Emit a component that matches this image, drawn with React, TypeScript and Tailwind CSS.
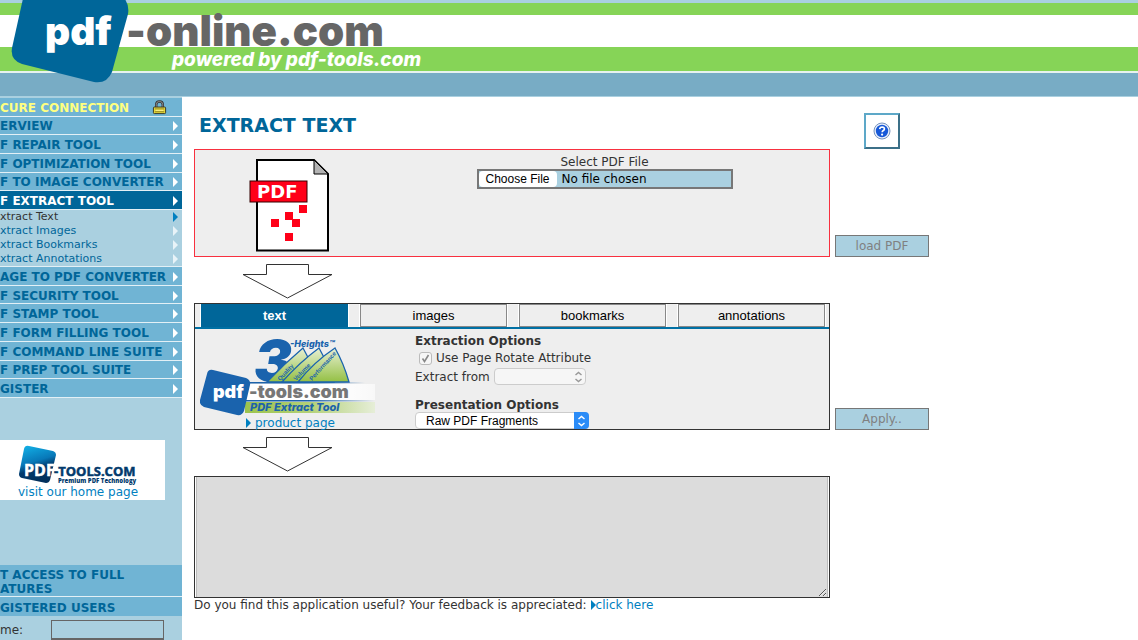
import React from "react";

const topLinks = ["ERVIEW", "F REPAIR TOOL", "F OPTIMIZATION TOOL", "F TO IMAGE CONVERTER"];
const subLinks = ["xtract Text", "xtract Images", "xtract Bookmarks", "xtract Annotations"];
const bottomLinks = [
  "AGE TO PDF CONVERTER",
  "F SECURITY TOOL",
  "F STAMP TOOL",
  "F FORM FILLING TOOL",
  "F COMMAND LINE SUITE",
  "F PREP TOOL SUITE",
  "GISTER",
];
const tabs = ["text", "images", "bookmarks", "annotations"];

function Marker({ className }: { className: string }) {
  return (
    <svg viewBox="0 0 5 10" className={`h-[10px] w-[5px] shrink-0 ${className}`} fill="currentColor" aria-hidden="true">
      <path d="M0 0L5 5L0 10Z" />
    </svg>
  );
}

function SiteLogo() {
  return (
    <svg width="440" height="84" viewBox="0 0 440 84" className="absolute top-0 left-0" role="img" aria-label="pdf-online.com">
      <path
        d="M24 -6L12 48Q10 60 22 64L94 82Q107 84 112 72L128 14Q130 2 120 -6Z"
        fill="#006699"
      />
      <g fontFamily="Inter, 'Liberation Sans', sans-serif" fontWeight="900">
        <text x="45" y="45" fontSize="39" fill="#fff">pdf</text>
        <text x="126" y="46" fontSize="42" fill="#666">-online.com</text>
      </g>
      <text
        x="172"
        y="66"
        fontSize="19"
        fontFamily="Inter, 'Liberation Sans', sans-serif"
        fontWeight="800"
        fontStyle="italic"
        fill="#fff"
      >
        powered by pdf-tools.com
      </text>
    </svg>
  );
}

function LockIcon() {
  return (
    <svg width="15" height="15" viewBox="0 0 16 16" aria-hidden="true">
      <path d="M4.500 8V5Q4.500 1.500 8 1.500Q11.500 1.500 11.500 5V8" fill="none" stroke="#333" strokeWidth="2.600" />
      <path d="M4.500 8V5Q4.500 1.500 8 1.500Q11.500 1.500 11.500 5V8" fill="none" stroke="#aaa" strokeWidth="0.800" />
      <rect x="1.500" y="7.500" width="13" height="7" rx="1" fill="#e8d93a" stroke="#333322" />
      <path d="M3 9.500H13M3 12.500H13" stroke="#8d8324" />
      <path d="M4 11H12" stroke="#fff799" />
    </svg>
  );
}

function NavLink({ label, active }: { label: string; active?: boolean }) {
  return (
    <a
      href="#"
      className={`flex items-center justify-between border-b border-[#e3f0f6] pt-[2px] pr-1 ${
        active ? "bg-[#006699] text-white" : "bg-[#70b4d4] text-[#006699]"
      }`}
    >
      <span>{label}</span>
      <Marker className="text-white" />
    </a>
  );
}

function ToolsLogo() {
  return (
    <svg width="120" height="40" viewBox="0 0 120 40" role="img" aria-label="PDF-TOOLS.COM Premium PDF Technology">
      <defs>
        <linearGradient id="badge" x1="0" y1="0" x2="0.300" y2="1">
          <stop offset="0" stopColor="#13b5ea" />
          <stop offset="0.500" stopColor="#0878b8" />
          <stop offset="0.700" stopColor="#023a6c" />
          <stop offset="1" stopColor="#02305c" />
        </linearGradient>
      </defs>
      <path d="M11 1L35 6Q38 7 38 10L32 35Q31 38 28 38L4 33Q1 32 1 29L6 4Q7 0 11 1Z" fill="url(#badge)" />
      <g fontFamily="'Open Sans', sans-serif" fontWeight="700" strokeWidth="0.500">
        <text x="6" y="31" fontSize="16" fill="#fff" stroke="#fff">
          PDF
        </text>
        <text x="36" y="31" fontSize="13" fill="#023a6c" stroke="#023a6c">
          -TOOLS.COM
        </text>
      </g>
      <text x="40" y="38" fontSize="6" fontFamily="'Open Sans', sans-serif" fontWeight="800" fill="#023a6c">
        Premium PDF Technology
      </text>
    </svg>
  );
}

function PdfFileIcon() {
  return (
    <svg width="82" height="96" viewBox="0 0 82 96" aria-hidden="true">
      <path d="M9 4H66L80 18V94.500H9Z" fill="#fff" stroke="#000" strokeWidth="2" />
      <path d="M66 4V18H80Z" fill="#b3b3b3" stroke="#000" strokeWidth="1" />
      <rect x="2" y="25" width="57" height="21" fill="#ff0018" stroke="#300" />
      <text x="9" y="42" fontSize="18" fontFamily="'DejaVu Sans', sans-serif" fontWeight="700" fill="#fff">
        PDF
      </text>
      <g fill="#ff0018">
        <rect x="51" y="49" width="8" height="8" />
        <rect x="37" y="56" width="8" height="8" />
        <rect x="44" y="63" width="8" height="8" />
        <rect x="23" y="63" width="8" height="8" />
        <rect x="37" y="77" width="8" height="8" />
      </g>
    </svg>
  );
}

function DownArrow() {
  return (
    <svg width="93" height="36" viewBox="0 0 93 36" aria-hidden="true">
      <path d="M25.500 1.500H67.500V11.500H91L46.500 35L2 11.500H25.500Z" fill="#fff" stroke="#333" />
    </svg>
  );
}

function HeightsLogo() {
  return (
    <svg width="176" height="80" viewBox="0 0 176 80" role="img" aria-label="3-Heights pdf-tools.com PDF Extract Tool">
      <defs>
        <linearGradient id="white" x1="0" x2="1">
          <stop offset="0.700" stopColor="#fff" />
          <stop offset="1" stopColor="#fff" stopOpacity="0.600" />
        </linearGradient>
        <linearGradient id="green" x1="0" x2="1">
          <stop offset="0" stopColor="#9cc34c" />
          <stop offset="0.500" stopColor="#b3d078" />
          <stop offset="1" stopColor="#e6eed8" />
        </linearGradient>
        <linearGradient id="line" x1="0" x2="1">
          <stop offset="0.500" stopColor="#1d63aa" />
          <stop offset="1" stopColor="#1d63aa" stopOpacity="0" />
        </linearGradient>
        <linearGradient id="hill" x1="0" y1="0" x2="0" y2="1">
          <stop offset="0" stopColor="#e8f0d4" />
          <stop offset="1" stopColor="#94c044" />
        </linearGradient>
      </defs>
      <text x="54" y="45" fontSize="57" fontFamily="Inter, sans-serif" fontWeight="900" fontStyle="italic" fill="#1a63ad">
        3
      </text>
      <g fill="url(#hill)" stroke="#1a63ad" strokeWidth="1.300">
        <path d="M67 46Q84 28 103 12Q112 28 118 46Z" />
        <path d="M82 46Q100 26 119 12Q128 28 134 46Z" />
        <path d="M98 46Q114 26 135 12Q144 28 149 46Z" />
      </g>
      <g fontFamily="'Liberation Sans', sans-serif" fontWeight="700" fill="#1a63ad">
        <text x="80" y="45" fontSize="6" transform="rotate(-46 80 45)">Quality</text>
        <text x="96" y="45" fontSize="6" transform="rotate(-46 96 45)">Volume</text>
        <text x="112" y="45" fontSize="6" transform="rotate(-48 112 45)">Performance</text>
      </g>
      <text x="90" y="11" fontSize="9" fontFamily="Inter, sans-serif" fontWeight="800" fontStyle="italic" fill="#1a63ad">
        -Heights™
      </text>
      <rect x="45" y="48" width="130" height="16" fill="url(#white)" />
      <rect x="45" y="46" width="120" height="1.500" fill="url(#line)" />
      <rect x="45" y="64" width="130" height="1.500" fill="url(#line)" />
      <rect x="45" y="66" width="130" height="11" fill="url(#green)" />
      <path d="M13 34L46 42Q51 44 50 49L44 75Q42 80 37 79L4 71Q-1 69 0 64L7 38Q8 33 13 34Z" fill="#1a63ad" />
      <g fontFamily="Inter, sans-serif" fontWeight="900">
        <text x="13" y="62" fontSize="18" fill="#fff">pdf</text>
        <text x="49" y="62" fontSize="18" fill="#777">-tools.com</text>
      </g>
      <text x="50" y="75" fontSize="11" fontFamily="Inter, sans-serif" fontWeight="800" fontStyle="italic" fill="#1d63aa">
        PDF Extract Tool
      </text>
    </svg>
  );
}

function HelpIcon() {
  return (
    <svg width="18" height="18" viewBox="0 0 18 18" aria-hidden="true">
      <circle cx="9" cy="9" r="8" fill="#e7effc" stroke="#7893bd" />
      <circle cx="9" cy="9" r="6.200" fill="#1658d8" />
      <path d="M6.700 7.200Q6.900 5 9.200 5Q11.500 5.100 11.400 7Q11.300 8.100 10 8.800Q9.200 9.300 9.200 10.300" fill="none" stroke="#fff" strokeWidth="1.700" />
      <circle cx="9.100" cy="12.600" r="1.100" fill="#fff" />
    </svg>
  );
}

function Chevrons() {
  return (
    <svg width="9" height="12" viewBox="0 0 9 12" fill="none" stroke="currentColor" strokeWidth="1.500" aria-hidden="true">
      <path d="M1.500 4L4.500 1.500L7.500 4M1.500 8L4.500 10.500L7.500 8" />
    </svg>
  );
}

const row = "grid grid-cols-[minmax(0,636px)_94px] gap-x-[5px]";
const actionButton =
  "h-[22px] self-end border border-[#777] bg-[#aad0e0] text-xs text-[#808080]";

export default function App() {
  return (
    <div className="flex h-screen flex-col overflow-hidden bg-white font-['DejaVu_Sans',Verdana,sans-serif] text-xs text-[#333]">
      <header className="relative shrink-0">
        <div className="h-[3px] bg-[#aad0e0]" />
        <div className="h-3 bg-[#86d457]" />
        <div className="h-8 bg-white" />
        <div className="h-6 bg-[#86d457]" />
        <div className="h-[2px] bg-[#e8f2ee]" />
        <div className="h-6 border-b border-[#aad0e0] bg-[#78acc5]" />
        <SiteLogo />
      </header>

      <div className="flex min-h-0 flex-1">
        <aside className="w-[182px] shrink-0 overflow-hidden bg-[#aad0e0] pt-px leading-[14px] whitespace-nowrap">
          <nav>
            <div className="grid min-h-[112px] auto-rows-fr font-bold">
              <div className="flex items-center justify-between border-b border-[#e3f0f6] bg-[#70b4d4] pt-[2px] pr-[15px] text-[#ffff80]">
                <span>CURE CONNECTION</span>
                <LockIcon />
              </div>
              {topLinks.map((label) => (
                <NavLink key={label} label={label} />
              ))}
              <NavLink label="F EXTRACT TOOL" active />
            </div>
            <ul className="border-b border-[#e3f0f6] text-[11px]">
              {subLinks.map((label, i) => (
                <li key={label}>
                  <a
                    href="#"
                    className={`flex items-center justify-between pr-1 leading-[14px] ${i === 0 ? "text-[#333]" : "text-[#006699]"}`}
                  >
                    <span>{label}</span>
                    <Marker className={i === 0 ? "text-[#0080c0]" : "text-[#e8f3f8]"} />
                  </a>
                </li>
              ))}
            </ul>
            <div className="grid min-h-[131px] auto-rows-fr font-bold">
              {bottomLinks.map((label) => (
                <NavLink key={label} label={label} />
              ))}
            </div>
          </nav>

          <a href="#" className="mt-[42px] mr-[17px] flex h-[60px] flex-col items-start bg-white pt-[5px] pl-[18px] text-[#0080c0]">
            <ToolsLogo />
            <span>visit our home page</span>
          </a>

          <h2 className="mt-[65px] border-b border-[#e3f0f6] bg-[#70b4d4] pt-[3px] font-bold text-[#006699]">
            T ACCESS TO FULL
            <br />
            ATURES
          </h2>
          <h2 className="bg-[#70b4d4] pt-[4px] pb-px font-bold text-[#006699]">GISTERED USERS</h2>
          <div className="flex items-center pt-[4px]">
            <label htmlFor="name" className="w-[51px]">
              me:
            </label>
            <input id="name" type="text" className="h-5 w-[113px] border border-b-2 border-[#666] bg-[#aad0e0] px-1" />
          </div>
        </aside>

        <main className="min-w-0 flex-1 pl-3">
          <div className={`${row} h-[52px] pt-4`}>
            <h1 className="pl-[5px] text-[19px] leading-6 font-bold text-[#006699]">EXTRACT TEXT</h1>
            <button
              type="button"
              aria-label="Help"
              className="flex h-9 w-9 items-center justify-center justify-self-center border-2 border-t-[#5da8c8] border-r-[#3c7088] border-b-[#3c7088] border-l-[#5da8c8] bg-white"
            >
              <HelpIcon />
            </button>
          </div>

          <div className={row}>
            <section className="grid min-h-[108px] grid-cols-[188px_1fr] border border-[#f8303f] bg-[#eee]">
              <div className="flex justify-center pt-[6px]">
                <PdfFileIcon />
              </div>
              <div className="flex flex-col items-center pt-[5px] pr-[3px]">
                <label htmlFor="file" className="leading-[14px]">
                  Select PDF File
                </label>
                <input
                  id="file"
                  type="file"
                  className="h-5 w-64 border-2 border-[#777] bg-[#aad0e0] text-xs leading-4 text-black file:mr-[5px] file:h-4 file:w-[78px] file:rounded file:bg-white file:font-['Liberation_Sans'] file:text-xs file:leading-4"
                />
              </div>
            </section>
            <button type="button" disabled className={actionButton}>
              load PDF
            </button>
          </div>

          <div className="flex h-[46px] w-[186px] justify-center pt-[6px]">
            <DownArrow />
          </div>

          <div className={row}>
            <section className="border border-[#333] bg-[#eee]">
              <div
                role="tablist"
                className="grid grid-cols-4 gap-3 border-b-2 border-[#0070a4] pr-1 pl-[6px] font-['Liberation_Sans'] text-[13px]"
              >
                {tabs.map((tab, i) => (
                  <button
                    key={tab}
                    type="button"
                    role="tab"
                    aria-selected={i === 0}
                    className={`h-[23px] border shadow-[1px_0_0_#fff,-1px_0_0_#fff] ${
                      i === 0
                        ? "border-[#006699] bg-[#006699] font-bold text-white"
                        : "border-[#888] bg-[#eee] text-black"
                    }`}
                  >
                    {tab}
                  </button>
                ))}
              </div>
              <div className="grid h-[100px] grid-cols-[220px_1fr]">
                <div className="flex flex-col items-start pt-[7px] pl-[5px] leading-[14px] text-[#0080c0]">
                  <HeightsLogo />
                  <a href="#" className="ml-[46px] flex items-center gap-1">
                    <Marker className="text-[#0080c0]" />
                    product page
                  </a>
                </div>
                <div className="flex flex-col items-start pt-[5px] leading-[14px]">
                  <h3 className="font-bold">Extraction Options</h3>
                  <label className="mt-[3px] flex items-center gap-1 pl-1">
                    <span className="relative flex">
                      <input
                        type="checkbox"
                        checked
                        disabled
                        readOnly
                        className="h-[13px] w-[13px] appearance-none rounded-[3px] border border-[#bbb] bg-[#f6f6f6]"
                      />
                      <svg viewBox="0 0 13 13" className="absolute inset-0" fill="none" stroke="#888" strokeWidth="1.600" aria-hidden="true">
                        <path d="M3.500 6.500L5.500 9.500L9.500 3" />
                      </svg>
                    </span>
                    Use Page Rotate Attribute
                  </label>
                  <div className="mt-[3px] flex items-center gap-1">
                    <label htmlFor="from">Extract from</label>
                    <span className="relative flex">
                      <select
                        id="from"
                        disabled
                        className="h-[17px] w-[92px] appearance-none rounded border border-[#ccc] bg-[#f6f6f6]"
                      />
                      <span className="pointer-events-none absolute inset-y-0 right-[3px] flex items-center text-[#999]">
                        <Chevrons />
                      </span>
                    </span>
                  </div>
                  <label htmlFor="presentation" className="mt-[13px] font-bold">
                    Presentation Options
                  </label>
                  <span className="relative flex">
                    <select
                      id="presentation"
                      className="h-[17px] w-[174px] appearance-none rounded border border-[#ccc] bg-white pl-[10px] font-['Liberation_Sans'] text-xs leading-[14px] text-black"
                    >
                      <option>Raw PDF Fragments</option>
                    </select>
                    <span className="pointer-events-none absolute inset-y-0 right-0 flex w-[15px] items-center justify-center rounded-r bg-[#2b8cf7] text-white">
                      <Chevrons />
                    </span>
                  </span>
                </div>
              </div>
            </section>
            <button type="button" disabled className={actionButton}>
              Apply..
            </button>
          </div>

          <div className="flex h-[46px] w-[186px] justify-center pt-[6px]">
            <DownArrow />
          </div>

          <div className={row}>
            <div className="flex border border-[#333] bg-white px-px">
              <textarea
                aria-label="Extracted text"
                className="h-[120px] w-full border-x border-[#bbb] bg-[#dcdcdc] p-1"
              />
            </div>
          </div>
          <p className="flex items-center leading-[14px]">
            Do you find this application useful? Your feedback is appreciated:
            <a href="#" className="ml-1 flex items-center text-[#0080c0]">
              <Marker className="text-[#0080c0]" />
              click here
            </a>
          </p>
        </main>
      </div>
    </div>
  );
}
